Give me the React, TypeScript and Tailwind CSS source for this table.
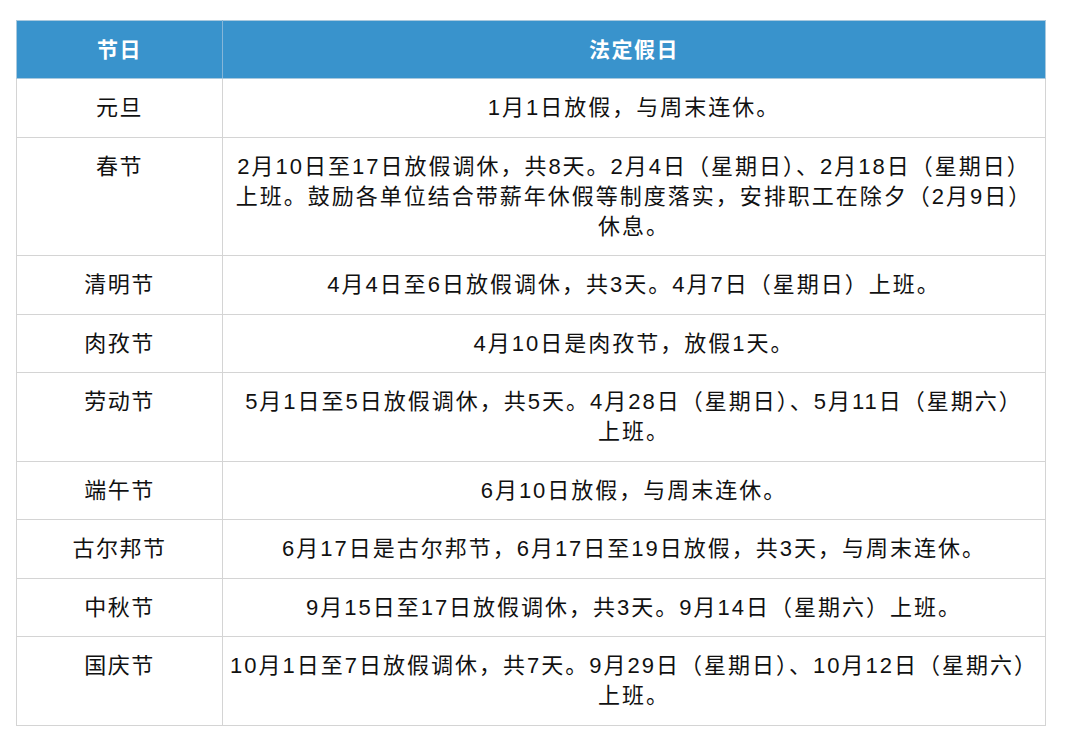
import React from "react";

type Row = { name: string; lines: string[] };

const rows: Row[] = [
  { name: "元旦", lines: ["1月1日放假，与周末连休。"] },
  {
    name: "春节",
    lines: [
      "2月10日至17日放假调休，共8天。2月4日（星期日）、2月18日（星期日）",
      "上班。鼓励各单位结合带薪年休假等制度落实，安排职工在除夕（2月9日）",
      "休息。",
    ],
  },
  { name: "清明节", lines: ["4月4日至6日放假调休，共3天。4月7日（星期日）上班。"] },
  { name: "肉孜节", lines: ["4月10日是肉孜节，放假1天。"] },
  {
    name: "劳动节",
    lines: ["5月1日至5日放假调休，共5天。4月28日（星期日）、5月11日（星期六）", "上班。"],
  },
  { name: "端午节", lines: ["6月10日放假，与周末连休。"] },
  { name: "古尔邦节", lines: ["6月17日是古尔邦节，6月17日至19日放假，共3天，与周末连休。"] },
  { name: "中秋节", lines: ["9月15日至17日放假调休，共3天。9月14日（星期六）上班。"] },
  {
    name: "国庆节",
    lines: ["10月1日至7日放假调休，共7天。9月29日（星期日）、10月12日（星期六）", "上班。"],
  },
];

export default function App() {
  return (
    <div
      className="min-h-[745px] w-full bg-white pl-[16px] pt-[20px] pr-[22px]"
      style={{ fontFamily: '"Liberation Sans", "Noto Sans CJK SC", sans-serif' }}
    >
      <table className="w-[1030px] border-collapse text-[22px] leading-[30px] tracking-[2px] text-[#111]">
        <thead>
          <tr className="bg-[#3993cc] text-white">
            <th className="h-[58px] w-[206px] border border-[#a9c9de] border-r-[#86b6d8] text-[21px] font-bold tracking-[1.5px]">
              节日
            </th>
            <th className="h-[58px] border border-[#a9c9de] text-[21px] font-bold tracking-[1.5px]">法定假日</th>
          </tr>
        </thead>
        <tbody>
          {rows.map((r) => (
            <tr key={r.name}>
              <td className="border border-[#d4d4d4] pt-[14px] pb-[13.5px] text-center align-top tracking-[1.5px]">
                {r.name}
              </td>
              <td className="border border-[#d4d4d4] px-[4px] pt-[14px] pb-[13.5px] text-center align-top">
                {r.lines.map((l, i) => (
                  <div key={i} className="whitespace-nowrap">
                    {l}
                  </div>
                ))}
              </td>
            </tr>
          ))}
        </tbody>
      </table>
    </div>
  );
}
